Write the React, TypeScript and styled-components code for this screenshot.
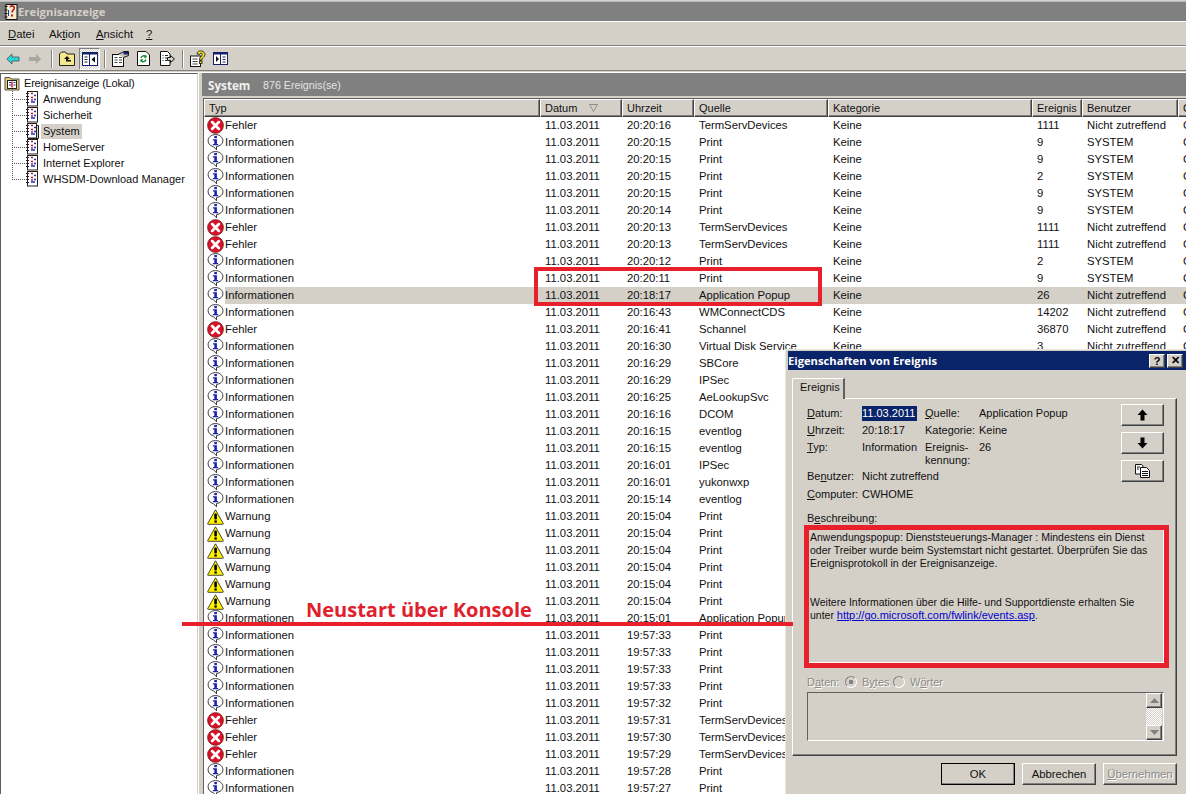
import React from "react";
import styled, { createGlobalStyle, css } from "styled-components";

const Global = createGlobalStyle`
  html, body { margin: 0; padding: 0; background: #d4d0c8; overflow: hidden; }
  * { box-sizing: border-box; }
`;

const raised = css`
  border-top: 1px solid #ffffff;
  border-left: 1px solid #ffffff;
  border-right: 1px solid #404040;
  border-bottom: 1px solid #404040;
  box-shadow: inset -1px -1px 0 #808080;
`;

const Shell = styled.div`
  position: relative;
  width: 1186px;
  height: 794px;
  overflow: hidden;
  background: #d4d0c8;
  font: 11px "Liberation Sans", Arial, sans-serif;
  color: #111;
  display: flex;
  flex-direction: column;
`;

const TitleBar = styled.div`
  height: 21px;
  margin-top: 1px;
  padding: 2px 0 2px 4px;
  border-top: 1px solid #b4bcc4;
  border-bottom: 1px solid #ffffff;
  background: #808080;
  display: flex;
  align-items: center;
  gap: 0;
  font-size: 11.3px;
  font-family: "Open Sans", sans-serif;
  font-weight: 700;
  color: #d4d0c8;
  flex: none;
`;

const MenuBar = styled.div`
  height: 24px;
  border-bottom: 1px solid #808080;
  display: flex;
  align-items: center;
  padding-left: 8px;
  flex: none;
  font-size: 11.3px;
`;

const MenuItem = styled.span<{ $w: number }>`
  width: ${(p) => p.$w}px;
  flex: none;
  u { text-decoration: underline; }
`;

const Toolbar = styled.div`
  height: 25px;
  border-top: 1px solid #ffffff;
  border-bottom: 1px solid #808080;
  display: flex;
  align-items: center;
  padding-left: 5px;
  flex: none;
`;

const ToolSlot = styled.div<{ $w: number; $pressed?: boolean }>`
  width: ${(p) => p.$w}px;
  height: 22px;
  flex: none;
  display: flex;
  align-items: center;
  justify-content: center;
  ${(p) =>
    p.$pressed &&
    css`
      background: repeating-conic-gradient(#ffffff 0 25%, #d4d0c8 0 50%) 0 0 / 2px 2px;
      border-top: 1px solid #808080;
      border-left: 1px solid #808080;
      border-right: 1px solid #fff;
      border-bottom: 1px solid #fff;
    `}
`;

const ToolSep = styled.div`
  width: 2px;
  height: 18px;
  flex: none;
  border-left: 1px solid #808080;
  border-right: 1px solid #ffffff;
  margin: 0 4px;
`;

const Panes = styled.div`
  flex: 1;
  min-height: 0;
  margin-top: 1px;
  display: flex;
  border-top: 1px solid #fff;
`;

const TreePane = styled.div`
  width: 198px;
  flex: none;
  background: #fff;
  border-top: 1px solid #606060;
  border-left: 1px solid #606060;
  border-right: 1px solid #d4d0c8;
  padding: 1px 0 0 3px;
  font-size: 11px;
  box-shadow: 1px 0 0 #fff;
`;

const TreeRoot = styled.div`
  height: 16px;
  display: flex;
  align-items: center;
  gap: 4px;
  letter-spacing: -0.2px;
`;

const TreeRow = styled.div`
  height: 16px;
  display: flex;
  align-items: center;
  margin-left: 8px;
`;

const Connector = styled.div<{ $last?: boolean }>`
  width: 13px;
  height: 16px;
  flex: none;
  background-image:
    repeating-linear-gradient(to bottom, #555 0 1px, transparent 1px 2px),
    repeating-linear-gradient(to right, #555 0 1px, transparent 1px 2px);
  background-size: 1px ${(p) => (p.$last ? "8px" : "16px")}, 13px 1px;
  background-position: 0 0, 0 8px;
  background-repeat: no-repeat;
`;

const TreeLabel = styled.span<{ $selected?: boolean }>`
  margin-left: 2px;
  padding: 0 2px;
  height: 15px;
  line-height: 15px;
  white-space: nowrap;
  background: ${(p) => (p.$selected ? "#d4d0c8" : "transparent")};
`;

const RightPane = styled.div`
  flex: 1;
  min-width: 0;
  margin-left: 4px;
  display: flex;
  flex-direction: column;
`;

const ScopeHeader = styled.div`
  height: 23px;
  flex: none;
  background: #808080;
  color: #f0f0f0;
  display: flex;
  align-items: center;
  padding-left: 6px;
  font-family: "Open Sans", sans-serif;
`;

const ScopeTitle = styled.span`
  font-weight: 700;
  font-size: 11.7px;
  width: 55px;
`;

const ScopeCount = styled.span`
  font-family: "Liberation Sans", sans-serif;
  font-size: 10.7px;
  color: #e4e4e4;
`;

const ListPane = styled.div`
  flex: 1;
  min-height: 0;
  margin-top: 2px;
  margin-left: 1px;
  background: #fff;
  border-left: 1px solid #606060;
  border-top: 1px solid #606060;
  overflow: hidden;
`;

const columns = "21px 315px 82px 72px 134px 204px 50px 96px 40px";

const HeaderRow = styled.div`
  display: grid;
  grid-template-columns: 336px 82px 72px 134px 204px 50px 96px 40px;
  height: 18px;
`;

const HeaderCell = styled.div`
  ${raised}
  background: #d4d0c8;
  line-height: 15px;
  padding-left: 4px;
  font-size: 11px;
  overflow: hidden;
  white-space: nowrap;
  display: flex;
  align-items: center;
  gap: 12px;
`;

const Row = styled.div`
  display: grid;
  grid-template-columns: ${columns};
  height: 17px;
  align-items: stretch;
`;

const IconCell = styled.div`
  display: flex;
  align-items: center;
  padding-left: 3px;
`;

const Cell = styled.div<{ $selected?: boolean; $first?: boolean }>`
  padding-left: ${(p) => (p.$first ? 0 : 5)}px;
  line-height: 17px;
  font-size: 11.3px;
  white-space: nowrap;
  overflow: hidden;
  background: ${(p) => (p.$selected ? "#d4d0c8" : "transparent")};
`;

const Annotation = styled.div`
  position: absolute;
  z-index: 5;
  left: 534px;
  top: 267px;
  width: 288px;
  height: 39px;
  border: 4px solid #e8202c;
`;

const StrikeLine = styled.div`
  position: absolute;
  z-index: 5;
  left: 182px;
  top: 622px;
  width: 611px;
  height: 4px;
  background: #e8202c;
`;

const Callout = styled.div`
  position: absolute;
  z-index: 5;
  left: 306px;
  top: 596px;
  font: 700 20px "Open Sans", sans-serif;
  color: #e0202c;
  white-space: nowrap;
`;

const Dialog = styled.div`
  position: absolute;
  z-index: 4;
  left: 785px;
  top: 349px;
  width: 404px;
  height: 448px;
  background: #d4d0c8;
  border-left: 1px solid #e8e6e0;
  border-top: 1px solid #e8e6e0;
  padding: 1px 12px 0 2px;
  display: flex;
  flex-direction: column;
`;

const DialogTitle = styled.div`
  height: 19px;
  margin-right: -9px;
  flex: none;
  background: #0a246a;
  color: #fff;
  font: 700 11.2px "Open Sans", sans-serif;
  display: flex;
  align-items: center;
  padding: 0 3px 0 0;
`;

const DialogTitleText = styled.span`
  flex: 1;
`;

const CaptionButton = styled.div`
  ${raised}
  width: 16px;
  height: 14px;
  background: #d4d0c8;
  color: #000;
  margin-left: 2px;
  display: flex;
  align-items: center;
  justify-content: center;
  font: 700 11px "Liberation Sans", sans-serif;
`;

const DialogBody = styled.div`
  flex: 1;
  padding-left: 4px;
  display: flex;
  flex-direction: column;
  min-height: 0;
`;

const TabStrip = styled.div`
  margin-top: 7px;
  height: 21px;
  flex: none;
  display: flex;
  align-items: flex-end;
`;

const Tab = styled.div`
  width: 53px;
  height: 21px;
  margin-bottom: -1px;
  position: relative;
  z-index: 1;
  background: #d4d0c8;
  border-top: 1px solid #fff;
  border-left: 1px solid #fff;
  border-right: 2px solid #606060;
  border-top-left-radius: 2px;
  padding-left: 7px;
  line-height: 17px;
`;

const TabPanel = styled.div`
  height: 358px;
  flex: none;
  border-top: 1px solid #fff;
  border-left: 1px solid #fff;
  border-right: 1px solid #404040;
  border-bottom: 1px solid #404040;
  box-shadow: inset -1px -1px 0 #808080;
  padding: 6px 12px 0 14px;
`;

const TopArea = styled.div`
  display: grid;
  grid-template-columns: 1fr 43px;
`;

const Fields = styled.div`
  display: grid;
  grid-template-columns: 55px 63px 54px 1fr;
  grid-template-rows: 17px 17px 28px 18px 18px;
  align-items: center;
`;

const FieldText = styled.div<{ $span?: number; $top?: boolean }>`
  white-space: nowrap;
  overflow: hidden;
  line-height: 13px;
  ${(p) => p.$span && `grid-column: span ${p.$span};`}
  ${(p) => p.$top && "align-self: start; padding-top: 2px;"}
`;

const Highlight = styled.span`
  background: #0a246a;
  color: #fff;
  padding: 1px 0;
  display: inline-block;
  line-height: 13px;
  width: 55px;
`;

const SideButtons = styled.div`
  display: flex;
  flex-direction: column;
  gap: 6px;
  margin-top: -1px;
`;

const SideButton = styled.div`
  ${raised}
  width: 43px;
  height: 22px;
  background: #d4d0c8;
  display: flex;
  align-items: center;
  justify-content: center;
`;

const DescLabel = styled.div`
  margin-top: 8px;
  height: 14px;
  line-height: 14px;
`;

const DescBox = styled.div`
  margin: 0 -5px 0 -3px;
  height: 143px;
  border: 5px solid #e8202c;
  padding: 1px 1px 0;
  line-height: 13px;
  font-size: 10.5px;
  box-shadow: inset -1px -1px 0 #fff;
  white-space: nowrap;
`;

const DescParagraph = styled.p`
  margin: 0 0 26px;
`;

const DescLink = styled.span`
  color: #0000d0;
  text-decoration: underline;
  font-size: 11px;
`;

const DataOptions = styled.div`
  margin-top: 7px;
  height: 14px;
  display: flex;
  align-items: center;
  color: #8a8a84;
  text-shadow: 1px 1px 0 #fff;
  line-height: 14px;
`;

const OptionLabel = styled.span<{ $w: number }>`
  width: ${(p) => p.$w}px;
  flex: none;
`;

const Radio = styled.span<{ $on?: boolean }>`
  width: 12px;
  height: 12px;
  border-radius: 50%;
  flex: none;
  margin-right: 5px;
  border: 1px solid #808080;
  border-right-color: #fff;
  border-bottom-color: #fff;
  background: ${(p) =>
    p.$on
      ? "radial-gradient(circle, #808080 0 2px, #d4d0c8 2.5px)"
      : "#d4d0c8"};
`;

const DataBox = styled.div`
  margin-top: 3px;
  height: 49px;
  border-top: 1px solid #606060;
  border-left: 1px solid #606060;
  border-right: 1px solid #fff;
  border-bottom: 1px solid #fff;
  display: flex;
  justify-content: flex-end;
  padding-right: 1px;
`;

const ScrollTrack = styled.div`
  width: 16px;
  display: flex;
  flex-direction: column;
  background: repeating-conic-gradient(#ffffff 0 25%, #d4d0c8 0 50%) 0 0 / 2px 2px;
  justify-content: space-between;
`;

const ScrollButton = styled.div`
  ${raised}
  height: 15px;
  background: #d4d0c8;
  display: flex;
  align-items: center;
  justify-content: center;
`;

const Footer = styled.div`
  margin-top: 7px;
  display: flex;
  justify-content: flex-end;
  gap: 7px;
`;

const FooterButton = styled.div<{ $default?: boolean; $disabled?: boolean }>`
  ${raised}
  width: 74px;
  height: 22px;
  background: #d4d0c8;
  line-height: 20px;
  text-align: center;
  font-size: 11.3px;
  ${(p) => p.$default && "outline: 1px solid #000; outline-offset: -1px;"}
  ${(p) => p.$disabled && "color: #8a8a84; text-shadow: 1px 1px 0 #fff;"}
`;

/* ---------- icons ---------- */

const ErrorIcon = () => (
  <svg width="17" height="17" viewBox="0 0 16 16">
    <circle cx="8" cy="8" r="7.4" fill="#d8122a" stroke="#7c1010" strokeWidth="0.8" />
    <path d="M4.8 4.8 11.2 11.2M11.2 4.8 4.8 11.2" stroke="#fff" strokeWidth="2.6" strokeLinecap="round" />
  </svg>
);

const InfoIcon = () => (
  <svg width="17" height="17" viewBox="0 0 16 17">
    <path d="M8 .6C3.800.6.6 3.200.6 6.800c0 3 2.300 5.200 5.200 5.800L9 15.800v-3.200c3.600-.6 6.400-2.800 6.400-5.800C15.400 3.200 12.200.6 8 .6Z" fill="#fff" stroke="#222" strokeWidth="0.9" />
    <rect x="6.800" y="2" width="2.600" height="2.200" fill="#1a22b0" />
    <path d="M5.400 5.200h4v4.800h1.200v1.300H5.400V10h1.400V6.500H5.400Z" fill="#1a22b0" />
  </svg>
);

const WarnIcon = () => (
  <svg width="17" height="16" viewBox="0 0 17 16">
    <path d="M8.500.8 16.300 14.600a.5.500 0 0 1-.4.700H1.100a.5.500 0 0 1-.4-.7Z" fill="#fff200" stroke="#333" strokeWidth="0.9" />
    <rect x="7.300" y="4.400" width="2.600" height="6" rx="1" fill="#000" />
    <rect x="7.400" y="11.400" width="2.400" height="2.200" fill="#000" />
  </svg>
);

const LogIcon = ({ open }: { open?: boolean }) => (
  <svg width="14" height="16" viewBox="0 0 14 16">
    {open && <path d="M11 2.500h2.500v13H3" fill="#d4d0c8" stroke="#222" strokeWidth="1" />}
    <rect x="2.500" y=".5" width={open ? 9 : 10} height="14.500" fill="#fff" stroke="#222" />
    <path d="M1 2.500h3M1 5.500h3M1 8.500h3M1 11.500h3" stroke="#222" strokeWidth="1" />
    <path d="M6 2.500h2M6 6.500h2" stroke="#c01818" strokeWidth="1.600" />
    <path d="M9 4.500h2M9 8.500h2M6 11h4" stroke="#2030b0" strokeWidth="1.600" />
    <path d="M6 9h2" stroke="#a020a0" strokeWidth="1.400" />
  </svg>
);

const RootIcon = () => (
  <svg width="16" height="16" viewBox="0 0 16 16">
    <path d="M1 2.500h5l1 1.500h8v11H1Z" fill="#e8d070" stroke="#555" />
    <rect x="3.500" y="5.500" width="9" height="8" fill="#fff" stroke="#222" />
    <path d="M8 6.500v6" stroke="#c01818" strokeWidth="1.400" />
    <path d="M5 7.500h2M5 10h2M9.500 7.500h2M9.500 10h2" stroke="#2030b0" />
  </svg>
);

const AppIcon = () => (
  <svg width="14" height="16" viewBox="0 0 14 16">
    <rect x="2" y=".5" width="11" height="15" fill="#f4eed0" stroke="#111" />
    <path d="M.5 2.500h3M.5 6h3M.5 9.500h3M.5 13h3" stroke="#111" />
    <path d="M6 3c2-2 5-1 4 2-.6 1.600-2 1.600-2 3.500" fill="none" stroke="#c01818" strokeWidth="1.600" />
    <rect x="7" y="10.500" width="2" height="2" fill="#c01818" />
    <path d="M4.500 6v6" stroke="#2030b0" />
  </svg>
);

const Back = () => (
  <svg width="14" height="12" viewBox="0 0 14 12">
    <path d="M.8 6 6 1v3h7v4H6v3Z" fill="#28d8d8" stroke="#444" strokeWidth=".7" />
  </svg>
);
const Forward = () => (
  <svg width="14" height="12" viewBox="0 0 14 12">
    <path d="M13.200 6 8 1v3H1v4h7v3Z" fill="#a8a8a0" />
  </svg>
);
const FolderUp = () => (
  <svg width="16" height="15" viewBox="0 0 16 15">
    <path d="M.5 3V14.500h15V3H8L6.500 1h-4L.5 3Z" fill="#f6e88c" stroke="#222" />
    <path d="M8 5 5 8h2v2.500h5v-1.500H9V8h2Z" fill="#111" />
  </svg>
);
const TreeToggle = () => (
  <svg width="16" height="14" viewBox="0 0 16 14">
    <rect x=".5" y=".5" width="15" height="13" fill="#fff" stroke="#16206a" />
    <rect x=".5" y=".5" width="15" height="2" fill="#16206a" />
    <path d="M7.500 1v12" stroke="#16206a" />
    <path d="M2.500 5h3M2.500 7.500h3M2.500 10h3" stroke="#222" />
    <path d="M13 4.500v6L9.500 7.500Z" fill="#111" />
  </svg>
);
const Properties = () => (
  <svg width="17" height="16" viewBox="0 0 17 16">
    <rect x=".5" y="3.500" width="11" height="12" fill="#fff" stroke="#111" />
    <path d="M2.500 6.500h3M7 6.500h3M2.500 9h3M7 9h3M2.500 11.500h3M7 11.500h3" stroke="#444" />
    <path d="M6 3.500 12 .5h4.500v4l-5 2" fill="#c8c8c0" stroke="#111" />
    <rect x="11.500" y="1" width="5" height="2.500" fill="#16206a" />
  </svg>
);
const Refresh = () => (
  <svg width="13" height="15" viewBox="0 0 13 15">
    <path d="M.5.500h8.500l3.500 3.500v10.500H.5Z" fill="#fff" stroke="#111" />
    <path d="M4 7a2.800 2.800 0 0 1 5-1M9 8.500a2.800 2.800 0 0 1-5 1" fill="none" stroke="#108828" strokeWidth="1.400" />
    <path d="M9.500 3.800v3h-3ZM3.500 11.300v-3h3Z" fill="#108828" />
  </svg>
);
const Export = () => (
  <svg width="15" height="15" viewBox="0 0 15 15">
    <path d="M.5.500h7l2.500 2.500v11.500H.5Z" fill="#fff" stroke="#111" />
    <path d="M2.500 4.500h1M5 4.500h3M2.500 7h1M5 7h2M2.500 9.500h1M5 9.500h2" stroke="#222" />
    <path d="M14.500 8 10.500 4.500v2H7.500v3h3v2Z" fill="#d0d0c8" stroke="#111" />
  </svg>
);
const HelpBook = () => (
  <svg width="16" height="17" viewBox="0 0 16 17">
    <rect x=".5" y="6" width="10" height="10.500" fill="#fff" stroke="#111" />
    <path d="M2.500 9h5M2.500 11.500h5M2.500 14h5" stroke="#444" />
    <path d="M7 4c0-4.500 8-4 8 .5 0 3-3.200 2.800-3.200 5.500H9.400c0-3.800 3-3.400 3-5.500 0-1.800-2.800-1.800-2.900 0Z" fill="#f4e020" stroke="#111" strokeWidth=".8" />
    <rect x="9.500" y="11" width="2.500" height="2.500" fill="#f4e020" stroke="#111" strokeWidth=".8" />
  </svg>
);
const Split = () => (
  <svg width="15" height="13" viewBox="0 0 15 13">
    <rect x=".5" y=".5" width="14" height="12" fill="#fff" stroke="#16206a" />
    <rect x=".5" y=".5" width="14" height="2" fill="#16206a" />
    <path d="M7.500 1v11" stroke="#16206a" />
    <path d="M3 4v6l3-3Z" fill="#111" />
    <path d="M9.500 5h3M9.500 7.500h3M9.500 10h3" stroke="#222" />
  </svg>
);
const ArrowUp = () => (
  <svg width="11" height="12" viewBox="0 0 11 12">
    <path d="M5.500.5 10.500 6H7.500v5.500h-4V6h-3Z" fill="#000" />
  </svg>
);
const ArrowDown = () => (
  <svg width="11" height="12" viewBox="0 0 11 12">
    <path d="M5.500 11.500 10.500 6H7.500V.5h-4V6h-3Z" fill="#000" />
  </svg>
);
const CopyDocs = () => (
  <svg width="15" height="14" viewBox="0 0 15 14">
    <path d="M.5.500h6l1.500 1.500v8H.5Z" fill="#fff" stroke="#111" />
    <path d="M5.500 3.500h6l3 3v7h-9Z" fill="#fff" stroke="#111" />
    <path d="M7 7.500h6M7 9.500h6M7 11.500h6M2 3h3M2 5h2" stroke="#111" />
  </svg>
);
const SortMark = () => (
  <svg width="9" height="8" viewBox="0 0 9 8">
    <path d="M.5.500h8L4.500 7.500Z" fill="none" stroke="#908c84" />
  </svg>
);
const Tri = ({ up }: { up?: boolean }) => (
  <svg width="9" height="5" viewBox="0 0 9 5">
    <path d={up ? "M4.500 0 9 5H0Z" : "M0 0h9L4.500 5Z"} fill="#808080" />
  </svg>
);

/* ---------- data ---------- */

type Kind = "e" | "i" | "w";
type Ev = [Kind, string, string, string?, string?];

const SYS = "SYSTEM";
const NZ = "Nicht zutreffend";

const events: Ev[] = [
  ["e", "20:20:16", "TermServDevices", "1111", NZ],
  ["i", "20:20:15", "Print", "9", SYS],
  ["i", "20:20:15", "Print", "9", SYS],
  ["i", "20:20:15", "Print", "2", SYS],
  ["i", "20:20:15", "Print", "9", SYS],
  ["i", "20:20:14", "Print", "9", SYS],
  ["e", "20:20:13", "TermServDevices", "1111", NZ],
  ["e", "20:20:13", "TermServDevices", "1111", NZ],
  ["i", "20:20:12", "Print", "2", SYS],
  ["i", "20:20:11", "Print", "9", SYS],
  ["i", "20:18:17", "Application Popup", "26", NZ],
  ["i", "20:16:43", "WMConnectCDS", "14202", NZ],
  ["e", "20:16:41", "Schannel", "36870", NZ],
  ["i", "20:16:30", "Virtual Disk Service", "3", NZ],
  ["i", "20:16:29", "SBCore"],
  ["i", "20:16:29", "IPSec"],
  ["i", "20:16:25", "AeLookupSvc"],
  ["i", "20:16:16", "DCOM"],
  ["i", "20:16:15", "eventlog"],
  ["i", "20:16:15", "eventlog"],
  ["i", "20:16:01", "IPSec"],
  ["i", "20:16:01", "yukonwxp"],
  ["i", "20:15:14", "eventlog"],
  ["w", "20:15:04", "Print"],
  ["w", "20:15:04", "Print"],
  ["w", "20:15:04", "Print"],
  ["w", "20:15:04", "Print"],
  ["w", "20:15:04", "Print"],
  ["w", "20:15:04", "Print"],
  ["i", "20:15:01", "Application Popup"],
  ["i", "19:57:33", "Print"],
  ["i", "19:57:33", "Print"],
  ["i", "19:57:33", "Print"],
  ["i", "19:57:33", "Print"],
  ["i", "19:57:32", "Print"],
  ["e", "19:57:31", "TermServDevices"],
  ["e", "19:57:30", "TermServDevices"],
  ["e", "19:57:29", "TermServDevices"],
  ["i", "19:57:28", "Print"],
  ["i", "19:57:27", "Print"],
];

const kindLabel: Record<Kind, string> = { e: "Fehler", i: "Informationen", w: "Warnung" };
const KindIcon = ({ k }: { k: Kind }) =>
  k === "e" ? <ErrorIcon /> : k === "i" ? <InfoIcon /> : <WarnIcon />;

const logs = ["Anwendung", "Sicherheit", "System", "HomeServer", "Internet Explorer", "WHSDM-Download Manager"];

export default function App() {
  return (
    <Shell>
      <Global />
      <TitleBar>
        <AppIcon />
        Ereignisanzeige
      </TitleBar>
      <MenuBar>
        <MenuItem $w={41}><u>D</u>atei</MenuItem>
        <MenuItem $w={47}>Ak<u>t</u>ion</MenuItem>
        <MenuItem $w={50}><u>A</u>nsicht</MenuItem>
        <MenuItem $w={12}><u>?</u></MenuItem>
      </MenuBar>
      <Toolbar>
        <ToolSlot $w={15}><Back /></ToolSlot>
        <ToolSlot $w={3} />
        <ToolSlot $w={24}><Forward /></ToolSlot>
        <ToolSep />
        <ToolSlot $w={19}><FolderUp /></ToolSlot>
        <ToolSlot $w={3} />
        <ToolSlot $w={21} $pressed><TreeToggle /></ToolSlot>
        <ToolSep />
        <ToolSlot $w={20}><Properties /></ToolSlot>
        <ToolSlot $w={26}><Refresh /></ToolSlot>
        <ToolSlot $w={22}><Export /></ToolSlot>
        <ToolSep />
        <ToolSlot $w={19}><HelpBook /></ToolSlot>
        <ToolSlot $w={26}><Split /></ToolSlot>
      </Toolbar>
      <Panes>
        <TreePane>
          <TreeRoot>
            <RootIcon />
            Ereignisanzeige (Lokal)
          </TreeRoot>
          {logs.map((name, i) => (
            <TreeRow key={name}>
              <Connector $last={i === logs.length - 1} />
              <LogIcon open={name === "System"} />
              <TreeLabel $selected={name === "System"}>{name}</TreeLabel>
            </TreeRow>
          ))}
        </TreePane>
        <RightPane>
          <ScopeHeader>
            <ScopeTitle>System</ScopeTitle>
            <ScopeCount>876 Ereignis(se)</ScopeCount>
          </ScopeHeader>
          <ListPane>
            <HeaderRow>
              <HeaderCell>Typ</HeaderCell>
              <HeaderCell>Datum <SortMark /></HeaderCell>
              <HeaderCell>Uhrzeit</HeaderCell>
              <HeaderCell>Quelle</HeaderCell>
              <HeaderCell>Kategorie</HeaderCell>
              <HeaderCell>Ereignis</HeaderCell>
              <HeaderCell>Benutzer</HeaderCell>
              <HeaderCell>Computer</HeaderCell>
            </HeaderRow>
            {events.map(([k, time, src, id, user], i) => {
              const sel = i === 10;
              return (
                <Row key={i}>
                  <IconCell><KindIcon k={k} /></IconCell>
                  <Cell $selected={sel} $first>{kindLabel[k]}</Cell>
                  <Cell $selected={sel}>11.03.2011</Cell>
                  <Cell $selected={sel}>{time}</Cell>
                  <Cell $selected={sel}>{src}</Cell>
                  <Cell $selected={sel}>Keine</Cell>
                  <Cell $selected={sel}>{id}</Cell>
                  <Cell $selected={sel}>{user}</Cell>
                  <Cell $selected={sel}>CWHOME</Cell>
                </Row>
              );
            })}
          </ListPane>
        </RightPane>
      </Panes>

      <Annotation />
      <StrikeLine />
      <Callout>Neustart über Konsole</Callout>

      <Dialog>
        <DialogTitle>
          <DialogTitleText>Eigenschaften von Ereignis</DialogTitleText>
          <CaptionButton>?</CaptionButton>
          <CaptionButton>✕</CaptionButton>
        </DialogTitle>
        <DialogBody>
          <TabStrip>
            <Tab>Ereignis</Tab>
          </TabStrip>
          <TabPanel>
            <TopArea>
              <Fields>
                <FieldText><u>D</u>atum:</FieldText>
                <FieldText><Highlight>11.03.2011</Highlight></FieldText>
                <FieldText><u>Q</u>uelle:</FieldText>
                <FieldText>Application Popup</FieldText>

                <FieldText><u>U</u>hrzeit:</FieldText>
                <FieldText>20:18:17</FieldText>
                <FieldText>Kategorie:</FieldText>
                <FieldText>Keine</FieldText>

                <FieldText $top><u>T</u>yp:</FieldText>
                <FieldText $top>Information</FieldText>
                <FieldText $top>Ereignis-<br />kennung:</FieldText>
                <FieldText $top>26</FieldText>

                <FieldText>Be<u>n</u>utzer:</FieldText>
                <FieldText $span={3}>Nicht zutreffend</FieldText>

                <FieldText><u>C</u>omputer:</FieldText>
                <FieldText $span={3}>CWHOME</FieldText>
              </Fields>
              <SideButtons>
                <SideButton><ArrowUp /></SideButton>
                <SideButton><ArrowDown /></SideButton>
                <SideButton><CopyDocs /></SideButton>
              </SideButtons>
            </TopArea>
            <DescLabel>B<u>e</u>schreibung:</DescLabel>
            <DescBox>
              <DescParagraph>
                Anwendungspopup: Dienststeuerungs-Manager : Mindestens ein Dienst<br />
                oder Treiber wurde beim Systemstart nicht gestartet. Überprüfen Sie das<br />
                Ereignisprotokoll in der Ereignisanzeige.
              </DescParagraph>
              <DescParagraph>
                Weitere Informationen über die Hilfe- und Supportdienste erhalten Sie<br />
                unter <DescLink>http://go.microsoft.com/fwlink/events.asp</DescLink>.
              </DescParagraph>
            </DescBox>
            <DataOptions>
              <OptionLabel $w={38}>D<u>a</u>ten:</OptionLabel>
              <Radio $on />
              <OptionLabel $w={31}>B<u>y</u>tes</OptionLabel>
              <Radio />
              <OptionLabel $w={40}>W<u>ö</u>rter</OptionLabel>
            </DataOptions>
            <DataBox>
              <ScrollTrack>
                <ScrollButton><Tri up /></ScrollButton>
                <ScrollButton><Tri /></ScrollButton>
              </ScrollTrack>
            </DataBox>
          </TabPanel>
          <Footer>
            <FooterButton $default>OK</FooterButton>
            <FooterButton>Abbrechen</FooterButton>
            <FooterButton $disabled><u>Ü</u>bernehmen</FooterButton>
          </Footer>
        </DialogBody>
      </Dialog>
    </Shell>
  );
}
